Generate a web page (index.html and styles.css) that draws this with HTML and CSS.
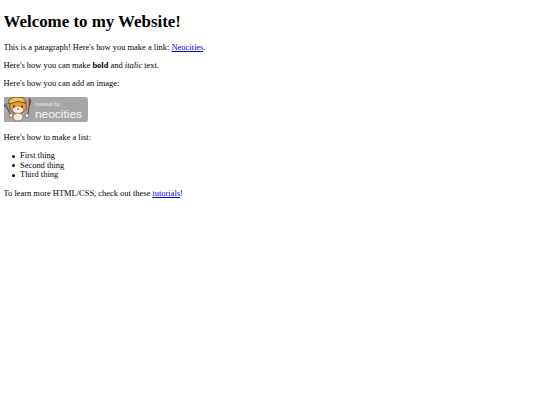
FILE: index.html
```html
<!DOCTYPE html>
<html lang="en">
<head>
    <meta charset="UTF-8">
    <title>My Website</title>
    <link rel="stylesheet" href="styles.css">
</head>
<body>
    <h1>Welcome to my Website!</h1>

    <p>This is a paragraph! Here's how you make a link: <a href="#">Neocities</a>.</p>

    <p>Here's how you can make <strong>bold</strong> and <em>italic</em> text.</p>

    <p>Here's how you can add an image:</p>

    <svg class="badge" viewBox="0 0 85 25" width="85" height="25" role="img" aria-label="Hosted by Neocities">
        <rect x="0" y="0" width="85" height="25" rx="2.5" fill="#a6a6a6"/>
        <!-- fork hand -->
        <path d="M2.500 8 L8 18" stroke="#555" stroke-width="1.300" fill="none"/>
        <path d="M1 7 L2 10 M3 6 L4 9.500" stroke="#555" stroke-width=".8" fill="none"/>
        <!-- brush -->
        <path d="M24.500 20 L26.500 7" stroke="#5c4028" stroke-width="1.100" fill="none"/>
        <path d="M25.500 7.500 L26 .5 L28 3 L27.500 8 Z" fill="#8c3a34"/>
        <!-- head -->
        <ellipse cx="15" cy="10" rx="8.500" ry="6.500" fill="#e59a3a" stroke="#4a3320" stroke-width=".7"/>
        <ellipse cx="15" cy="13" rx="5" ry="3.300" fill="#fbeedd"/>
        <!-- hat -->
        <path d="M5 7 L6.500 2 L12 0 L20 .5 L23.500 6 L15 4.500 Z" fill="#f1c04a" stroke="#4a3320" stroke-width=".7"/>
        <circle cx="11" cy="9.500" r=".9" fill="#2b1d12"/>
        <circle cx="19" cy="9.500" r=".9" fill="#2b1d12"/>
        <circle cx="15" cy="12" r=".7" fill="#3a2415"/>
        <!-- body -->
        <ellipse cx="15" cy="20" rx="5" ry="4" fill="#f6ead8" stroke="#4a3320" stroke-width=".5"/>
        <circle cx="8" cy="18.500" r="1.900" fill="#fdf5e8" stroke="#4a3320" stroke-width=".5"/>
        <circle cx="24" cy="18.500" r="1.900" fill="#fdf5e8" stroke="#4a3320" stroke-width=".5"/>
        <text class="badge-small" x="32" y="8.500" textLength="26" lengthAdjust="spacingAndGlyphs">hosted by,</text>
        <text class="badge-name" x="32" y="20.500" textLength="47" lengthAdjust="spacingAndGlyphs">neocities</text>
    </svg>

    <p>Here's how to make a list:</p>

    <ul>
        <li>First thing</li>
        <li>Second thing</li>
        <li>Third thing</li>
    </ul>

    <p>To learn more HTML/CSS, check out these <a href="#">tutorials</a>!</p>
</body>
</html>
```

FILE: styles.css
```css
body {
    margin: 4px 3.5px;
    font-family: "Liberation Serif", serif;
    font-size: 8.45px;
    line-height: 9.5px;
    color: #000;
    background-color: #fff;
}

h1 {
    font-size: 16.9px;
    line-height: 19px;
    margin: 8px 0 11.5px;
}

p {
    margin: 8.8px 0;
}

a {
    color: #0000ee;
}

ul {
    margin: 9px 0;
    padding-left: 8px;
    list-style: none;
}

li {
    display: flex;
    align-items: center;
    gap: 5.5px;
}

li::before {
    content: "";
    width: 3px;
    height: 3px;
    border-radius: 50%;
    background-color: #000;
}

.badge {
    display: block;
    margin: 0 0 10.5px -0.5px;
}

.badge-small {
    font-family: "Liberation Sans", sans-serif;
    font-size: 5.5px;
    fill: #e8e8e8;
}

.badge-name {
    font-family: "Liberation Sans", sans-serif;
    font-size: 11.5px;
    fill: #f6f6f6;
}
```
